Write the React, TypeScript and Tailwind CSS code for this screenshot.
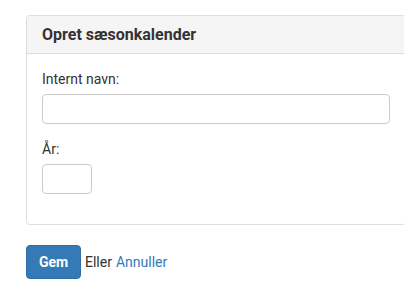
import React, { useState } from "react";

const App: React.FC = () => {
  const [name, setName] = useState("");
  const [year, setYear] = useState("");

  return (
    <div
      className="w-[404px] h-[296px] overflow-hidden bg-white pl-[26px] pt-[15px] text-[#333] text-[14px] leading-[20px]"
      style={{ fontFamily: "Roboto, 'Helvetica Neue', Arial, sans-serif" }}
    >
      {/* Panel */}
      <div className="w-[380px] border border-[#ddd] rounded-[4px] mb-[20px]">
        <div className="bg-[#f5f5f5] border-b border-[#ddd] px-[15px] py-[8px] rounded-t-[3px]">
          <h3 className="text-[16px] leading-[21px] font-bold">Opret sæsonkalender</h3>
        </div>

        <div className="p-[15px]">
          {/* Internt navn */}
          <div className="mb-[15px]">
            <label className="block mb-[5px]">Internt navn:</label>
            <input
              type="text"
              value={name}
              onChange={(e) => setName(e.target.value)}
              className="block w-full h-[30px] px-[12px] border border-[#ccc] rounded-[4px] focus:outline-none"
            />
          </div>

          {/* År */}
          <div className="mb-[15px]">
            <label className="block mb-[5px]">År:</label>
            <input
              type="text"
              value={year}
              onChange={(e) => setYear(e.target.value)}
              className="block w-[50px] h-[30px] px-[6px] border border-[#ccc] rounded-[4px] focus:outline-none"
            />
          </div>
        </div>
      </div>

      {/* Actions */}
      <div className="flex items-center">
        <button className="h-[34px] w-[55px] bg-[#337ab7] text-white font-bold rounded-[4px] border border-[#2e6da4]">
          Gem
        </button>
        <span className="ml-[4px]">Eller</span>
        <a href="#" className="ml-[4px] text-[#337ab7]">
          Annuller
        </a>
      </div>
    </div>
  );
};

export default App;
